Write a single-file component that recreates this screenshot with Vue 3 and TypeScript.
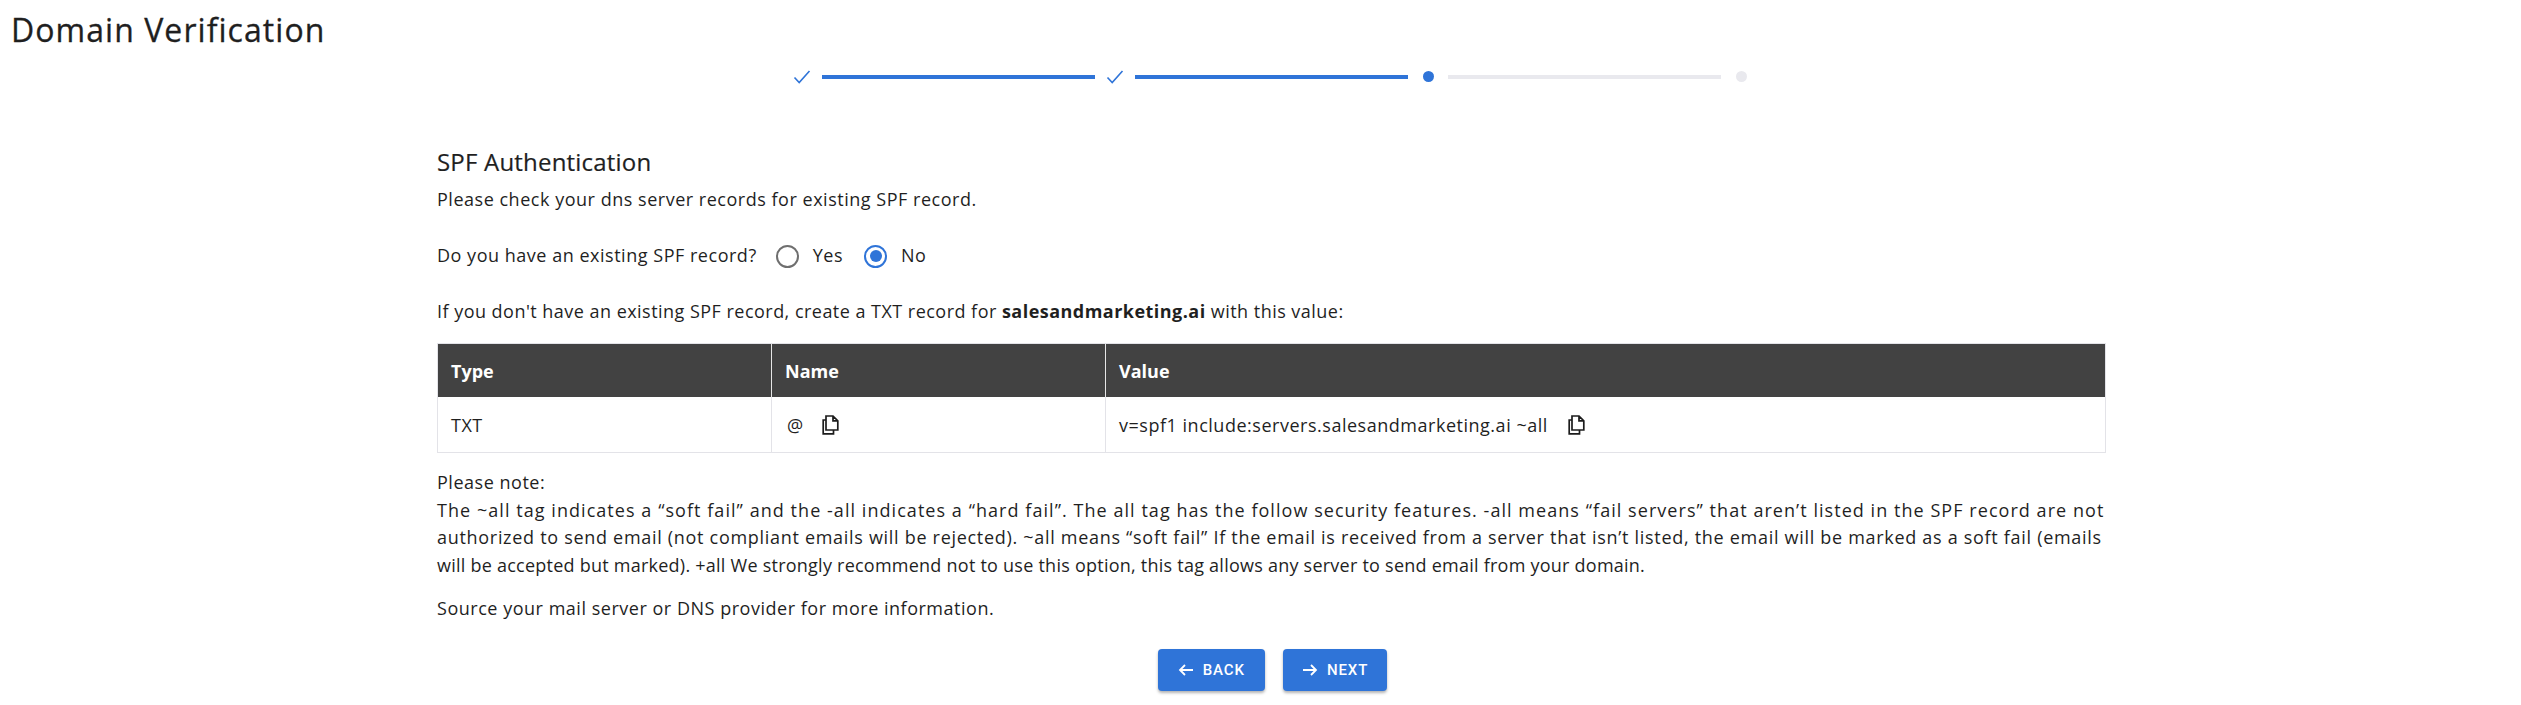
<script setup lang="ts">
interface Step { state: 'done' | 'active' | 'todo'; line?: 'done' | 'todo' }
const steps: Step[] = [
  { state: 'done', line: 'done' },
  { state: 'done', line: 'done' },
  { state: 'active', line: 'todo' },
  { state: 'todo' },
]
</script>

<template>
  <div class="page">
    <h1 class="title">Domain Verification</h1>
    <div class="stepper">
      <template v-for="(s, i) in steps" :key="i">
        <span class="step">
          <svg v-if="s.state === 'done'" width="18" height="18" viewBox="0 0 18 18">
            <path d="M1.5 9.5 L6.2 14.5 L16.5 3" fill="none" stroke="#2f74d8" stroke-width="1.6" />
          </svg>
          <span v-else class="dot" :class="s.state"></span>
        </span>
        <span v-if="s.line" class="line" :class="s.line"></span>
      </template>
    </div>
    <main class="content">
      <h2 class="heading">SPF Authentication</h2>
      <p class="text lead">Please check your dns server records for existing SPF record.</p>
      <div class="question text">
        <span>Do you have an existing SPF record?</span>
        <span class="radio"></span><span class="opt">Yes</span>
        <span class="radio on"><span class="radio-dot"></span></span><span class="opt">No</span>
      </div>
      <p class="text create">If you don't have an existing SPF record, create a TXT record for <b>salesandmarketing.ai</b> with this value:</p>
      <div class="table">
        <div class="th c1">Type</div>
        <div class="th c2">Name</div>
        <div class="th c3">Value</div>
        <div class="td c1">TXT</div>
        <div class="td c2"><span class="at">@</span>
          <svg class="copy" width="17" height="20" viewBox="0 0 17 20"><path d="M4 5H1.2V18.8H11.5V15M4 1H11L15.8 5.8V15H4ZM11 1V5.8H15.8" fill="none" stroke="#1c1c1c" stroke-width="1.7" /></svg>
        </div>
        <div class="td c3">v=spf1 include:servers.salesandmarketing.ai ~all
          <svg class="copy" width="17" height="20" viewBox="0 0 17 20"><path d="M4 5H1.2V18.8H11.5V15M4 1H11L15.8 5.8V15H4ZM11 1V5.8H15.8" fill="none" stroke="#1c1c1c" stroke-width="1.7" /></svg>
        </div>
      </div>
      <div class="text note">
        <div>Please note:</div>
        <div class="l1">The ~all tag indicates a “soft fail” and the -all indicates a “hard fail”. The all tag has the follow security features. -all means “fail servers” that aren’t listed in the SPF record are not</div>
        <div class="l2">authorized to send email (not compliant emails will be rejected). ~all means “soft fail” If the email is received from a server that isn’t listed, the email will be marked as a soft fail (emails</div>
        <div class="l3">will be accepted but marked). +all We strongly recommend not to use this option, this tag allows any server to send email from your domain.</div>
      </div>
      <p class="text source">Source your mail server or DNS provider for more information.</p>
      <div class="actions">
        <button class="btn back" type="button">
          <svg width="16" height="14" viewBox="0 0 16 14"><path d="M15 7H2M7 2L2 7L7 12" fill="none" stroke="#fff" stroke-width="1.8" /></svg>
          BACK
        </button>
        <button class="btn next" type="button">
          <svg width="16" height="14" viewBox="0 0 16 14"><path d="M1 7H14M9 2L14 7L9 12" fill="none" stroke="#fff" stroke-width="1.8" /></svg>
          NEXT
        </button>
      </div>
    </main>
  </div>
</template>

<style>
html, body { margin: 0; background: #fff; }
</style>

<style scoped>
.page {
  width: 2521px;
  height: 705px;
  overflow: hidden;
  font-family: "Open Sans", "Liberation Sans", sans-serif;
  color: #1f1f1f;
}
.title {
  margin: 0;
  padding: 10px 0 0 11px;
  height: 48px;
  box-sizing: border-box;
  font-size: 32px;
  line-height: 40px;
  font-weight: 400;
  letter-spacing: 1.05px;
  -webkit-text-stroke: 0.3px #1f1f1f;
}
.stepper {
  display: flex;
  align-items: center;
  justify-content: flex-start;
  margin: 20px 0 0 792px;
  height: 17px;
}
.step { width: 20px; display: flex; justify-content: center; align-items: center; }
.dot { width: 11px; height: 11px; border-radius: 50%; }
.dot.active { background: #2f74d8; }
.dot.todo { background: #e9e9ee; }
.line { width: 273px; height: 4px; margin: 0 10px; }
.line.done { background: #2f74d8; }
.line.todo { background: #e9e9ee; }
.content { margin-left: 437px; width: 1669px; }
.heading {
  margin: 0;
  padding-top: 61px;
  font-size: 24px;
  line-height: 32px;
  font-weight: 500;
  letter-spacing: 0.2px;
  -webkit-text-stroke: 0.2px #1f1f1f;
}
.text { font-size: 18px; line-height: 27.5px; letter-spacing: 0.52px; margin: 0; }
.lead { margin-top: 8px; }
.question { display: flex; align-items: center; margin-top: 29px; height: 27px; }
.radio {
  width: 23px; height: 23px; box-sizing: border-box;
  border: 2.5px solid #6f6f6f; border-radius: 50%;
  margin-left: 19px;
  display: flex; align-items: center; justify-content: center;
}
.radio.on { border-color: #2f74d8; margin-left: 21px; }
.radio-dot { width: 12px; height: 12px; background: #2f74d8; border-radius: 50%; flex: none; }
.opt { margin-left: 14px; }
.create { margin-top: 28px; letter-spacing: 0.47px; }
.create b { font-weight: 700; }
.table {
  display: grid;
  grid-template-columns: 333px 334px 1fr;
  grid-template-rows: 53px 55px;
  margin-top: 18px;
  border: 1px solid #e3e3e8;
}
.th {
  background: #424242;
  color: #fff;
  font-size: 18px;
  font-weight: 700;
  display: flex;
  align-items: center;
  padding-left: 13px;
  border-left: 1px solid #e6e6e6;
}
.td {
  font-size: 18px;
  letter-spacing: 0.52px;
  display: flex;
  align-items: center;
  padding-left: 13px;
  border-left: 1px solid #e3e3e8;
  white-space: pre;
}
.at { margin: 0 3px 0 2px; }
.c1 { border-left: none; }
.copy { margin-left: 15px; }
.note { margin-top: 16px; white-space: nowrap; }
.l1 { letter-spacing: 1.05px; }
.l2 { letter-spacing: 0.7px; }
.l3 { letter-spacing: 0.24px; }
.source { margin-top: 16px; }
.actions { display: flex; justify-content: center; gap: 18px; margin-top: 26px; padding-left: 2px; }
.btn {
  height: 42px;
  border: none;
  border-radius: 4px;
  background: #2f74d8;
  color: #fff;
  font-family: Roboto, "Liberation Sans", sans-serif;
  font-size: 15px;
  font-weight: 500;
  letter-spacing: 0.9px;
  padding: 0 20px;
  display: flex;
  align-items: center;
  gap: 9px;
  box-shadow: 0 2px 3px rgba(0, 0, 0, 0.3);
}
.btn.next { padding: 0 19px; }
</style>
